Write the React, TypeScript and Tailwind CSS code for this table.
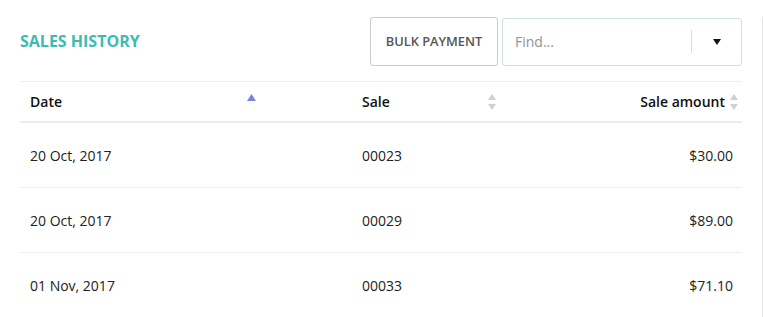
const rows = [
  { date: "20 Oct, 2017", sale: "00023", amount: "$30.00" },
  { date: "20 Oct, 2017", sale: "00029", amount: "$89.00" },
  { date: "01 Nov, 2017", sale: "00033", amount: "$71.10" },
];

function SortBoth() {
  return (
    <svg width="8" height="16" viewBox="0 0 8 16" className="shrink-0">
      <path d="M4 0L8 6H0z" fill="#d0d0d0" />
      <path d="M4 16L8 10H0z" fill="#d0d0d0" />
    </svg>
  );
}

function SortUp() {
  return (
    <svg width="9" height="7" viewBox="0 0 9 7" className="shrink-0">
      <path d="M4.5 0L9 7H0z" fill="#7d81dd" />
    </svg>
  );
}

export default function App() {
  return (
    <div
      className="w-[764px] h-[317px] bg-white overflow-hidden"
      style={{ fontFamily: '"Open Sans", "Liberation Sans", sans-serif' }}
    >
      <div className="w-[763px] h-full border-r border-[#e6e6e6]">
        <div className="pl-5 pr-[20px]">
          <div className="flex items-center h-[49px] mt-[17px]">
            <h2 className="text-[16px] font-bold text-[#3bbcb3] leading-none mt-[-1px]">
              SALES HISTORY
            </h2>
            <div className="ml-auto flex items-center gap-[4px]">
              <button className="w-[128px] h-[49px] rounded-[3px] border border-[#cccccc] bg-white text-[12.8px] font-semibold text-[#555]">
                BULK PAYMENT
              </button>
              <div className="w-[240px] h-[48px] rounded-[3px] border border-[#d2e0df] flex items-center">
                <span className="pl-[12px] text-[14px] text-[#8a949a] flex-1">Find...</span>
                <div className="w-px h-[23px] bg-[#d2e0df]" />
                <div className="w-[49px] flex justify-center">
                  <svg width="8" height="6" viewBox="0 0 8 6">
                    <path d="M0 0H8L4 6z" fill="#111" />
                  </svg>
                </div>
              </div>
            </div>
          </div>

          <div className="mt-[15px] border-t border-[#eeeeee]">
            <div className="grid grid-cols-[242px_240px_240px] h-[41px] items-center border-b-2 border-[#e9ecef] text-[14px] font-semibold text-[#111]">
              <div className="flex items-center pl-[10px] pr-[6px]">
                <span>Date</span>
                <span className="ml-auto mb-[8px]">
                  <SortUp />
                </span>
              </div>
              <div className="flex items-center pl-[100px] pr-[6px]">
                <span>Sale</span>
                <span className="ml-auto">
                  <SortBoth />
                </span>
              </div>
              <div className="flex items-center justify-end pr-[4px] gap-[5px]">
                <span>Sale amount</span>
                <SortBoth />
              </div>
            </div>

            {rows.map((r, i) => (
              <div
                key={i}
                className={
                  "grid grid-cols-[242px_240px_240px] h-[65px] items-center text-[14px] text-[#222] " +
                  (i < rows.length - 1 ? "border-b border-[#eeeeee]" : "")
                }
              >
                <div className="pl-[10px]">{r.date}</div>
                <div className="pl-[100px]">{r.sale}</div>
                <div className="text-right pr-[9px]">{r.amount}</div>
              </div>
            ))}
          </div>
        </div>
      </div>
    </div>
  );
}
